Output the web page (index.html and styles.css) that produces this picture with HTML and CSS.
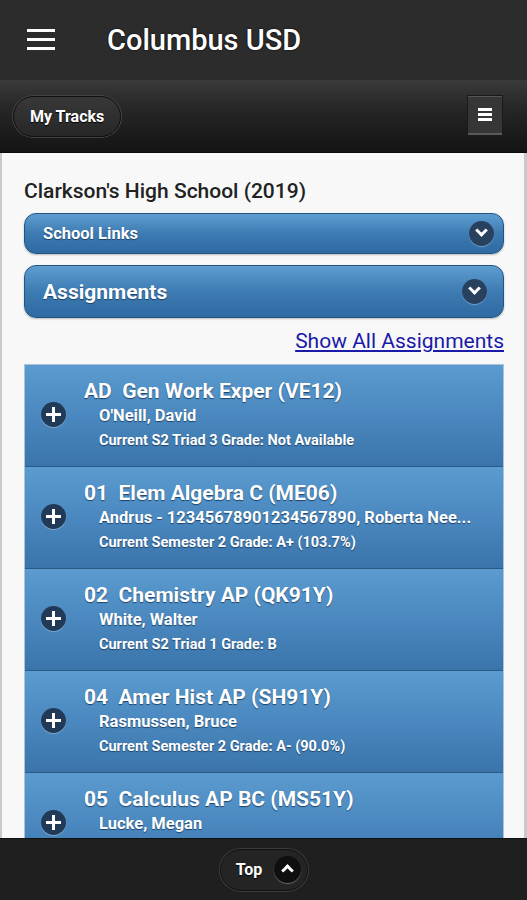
FILE: index.html
```html
<!DOCTYPE html>
<html lang="en">
<head>
    <meta charset="UTF-8">
    <meta name="viewport" content="width=device-width, initial-scale=1.0">
    <title>Columbus USD</title>
    <link rel="stylesheet" href="styles.css">
</head>
<body>

<div class="app">
    <div class="top-bar">
        <span class="burger"><i></i><i></i><i></i></span>
        <h1>Columbus USD</h1>
    </div>
    <div class="tool-bar">
        <a class="pill-btn">My Tracks</a>
        <a class="menu-btn"><i></i><i></i><i></i></a>
    </div>

    <div class="content">
        <h2>Clarkson's High School (2019)</h2>
        <div class="collapsible small">
            <span>School Links</span>
            <span class="circle-icon down"></span>
        </div>
        <div class="collapsible big">
            <span>Assignments</span>
            <span class="circle-icon down"></span>
        </div>
        <div class="link-row"><a href="#">Show All Assignments</a></div>

        <ul class="class-list">
            <li>
                <span class="circle-icon plus"></span>
                <div class="class-text">
                    <h3>AD&nbsp; Gen Work Exper (VE12)</h3>
                    <p class="teacher">O'Neill, David</p>
                    <p class="grade">Current S2 Triad 3 Grade: Not Available</p>
                </div>
            </li>
            <li>
                <span class="circle-icon plus"></span>
                <div class="class-text">
                    <h3>01&nbsp; Elem Algebra C (ME06)</h3>
                    <p class="teacher">Andrus - 12345678901234567890, Roberta Nee...</p>
                    <p class="grade">Current Semester 2 Grade: A+ (103.7%)</p>
                </div>
            </li>
            <li>
                <span class="circle-icon plus"></span>
                <div class="class-text">
                    <h3>02&nbsp; Chemistry AP (QK91Y)</h3>
                    <p class="teacher">White, Walter</p>
                    <p class="grade">Current S2 Triad 1 Grade: B</p>
                </div>
            </li>
            <li>
                <span class="circle-icon plus"></span>
                <div class="class-text">
                    <h3>04&nbsp; Amer Hist AP (SH91Y)</h3>
                    <p class="teacher">Rasmussen, Bruce</p>
                    <p class="grade">Current Semester 2 Grade: A- (90.0%)</p>
                </div>
            </li>
            <li>
                <span class="circle-icon plus"></span>
                <div class="class-text">
                    <h3>05&nbsp; Calculus AP BC (MS51Y)</h3>
                    <p class="teacher">Lucke, Megan</p>
                </div>
            </li>
        </ul>
    </div>

    <div class="bottom-bar">
        <a class="pill-btn top-btn">Top <span class="circle-icon up"></span></a>
    </div>
</div>

</body>
</html>
```

FILE: styles.css
```css
body {
    margin: 0;
    font-family: Roboto, "Liberation Sans", Arial, sans-serif;
    background-color: #1e1e1e;
}
.app {
    display: flex;
    flex-direction: column;
    height: 100vh;
    overflow: hidden;
}
.top-bar {
    height: 80px;
    flex-shrink: 0;
    display: flex;
    align-items: center;
    background-color: #2c2c2c;
}
.top-bar h1 {
    margin: 0 0 0 52px;
    font-size: 29px;
    font-weight: 500;
    color: white;
    text-shadow: 0 0 2px #000000;
}
.burger {
    display: flex;
    flex-direction: column;
    gap: 6px;
    margin-left: 27px;
    margin-top: -2px;
}
.burger i {
    display: block;
    width: 28px;
    height: 3px;
    background-color: white;
}
.tool-bar {
    height: 72px;
    flex-shrink: 0;
    display: flex;
    align-items: center;
    justify-content: space-between;
    padding: 0 25px 0 13px;
    background: linear-gradient(#3a3a3a, #262626 40%, #141414);
    border-bottom: 1px solid #0c0c0c;
}
.pill-btn {
    display: inline-flex;
    align-items: center;
    height: 39px;
    padding: 0 16px;
    border-radius: 21px;
    border: 1px solid #111111;
    box-shadow: 0 0 0 1px #444444;
    background: linear-gradient(#383838, #272727);
    color: white;
    font-size: 16px;
    font-weight: bold;
    text-shadow: 0 1px 1px #000000;
}
.tool-bar .pill-btn {
    margin-top: 1px;
}
.menu-btn {
    display: flex;
    flex-direction: column;
    justify-content: center;
    gap: 2px;
    align-items: center;
    width: 34px;
    height: 36px;
    margin-top: -2px;
    background-color: #363636;
    border-top: 1px solid #555555;
    border-bottom: 2px solid #5a5a5a;
    box-shadow: 0 0 0 1px #1a1a1a;
}
.menu-btn i {
    display: block;
    width: 14px;
    height: 3px;
    background-color: white;
}
.content {
    flex: 1;
    overflow: hidden;
    background-color: #f8f8f8;
    border-left: 2px solid #c9c9c9;
    border-right: 3px solid #c9c9c9;
    padding: 26px 20px 0 22px;
}
.content h2 {
    margin: 0 0 10px 0;
    font-size: 21px;
    font-weight: 500;
    color: #222222;
    line-height: 24px;
}
.collapsible {
    display: flex;
    align-items: center;
    justify-content: space-between;
    border-radius: 12px;
    border: 1px solid #245482;
    background: linear-gradient(#5e9dd0, #3d7bb3 50%, #2f6aa2);
    color: white;
    font-weight: bold;
    text-shadow: 0 1px 1px #1c3f63;
    box-shadow: 0 1px 2px rgba(0, 0, 0, 0.25);
}
.collapsible.small {
    height: 39px;
    padding: 0 9px 0 18px;
    font-size: 16.5px;
    margin-bottom: 11px;
}
.collapsible.big {
    height: 51px;
    padding: 0 16px 0 18px;
    font-size: 21px;
}
.link-row {
    text-align: right;
    margin-top: 10px;
    line-height: 26px;
}
.link-row a {
    color: #1a1aa8;
    font-size: 21px;
}
.circle-icon {
    position: relative;
    display: inline-block;
    flex-shrink: 0;
    width: 25px;
    height: 25px;
    border-radius: 50%;
    background-color: #27415f;
    box-shadow: 0 1px 1px rgba(255, 255, 255, 0.3);
}
.circle-icon.down::after,
.circle-icon.up::after {
    content: "";
    position: absolute;
    left: 8px;
    width: 6px;
    height: 6px;
    border-right: 3px solid white;
    border-bottom: 3px solid white;
}
.circle-icon.down::after {
    top: 5px;
    transform: rotate(45deg);
}
.circle-icon.up::after {
    top: 9px;
    transform: rotate(-135deg);
}
.circle-icon.plus::before,
.circle-icon.plus::after {
    content: "";
    position: absolute;
    background-color: white;
}
.circle-icon.plus::before {
    left: 5px;
    top: 11px;
    width: 15px;
    height: 3px;
}
.circle-icon.plus::after {
    left: 11px;
    top: 5px;
    width: 3px;
    height: 15px;
}
.class-list {
    list-style: none;
    margin: 8px 0 0 0;
    padding: 0;
    border: 1px solid #aac4dc;
}
.class-list li {
    display: flex;
    align-items: flex-start;
    box-sizing: border-box;
    height: 102px;
    padding: 13px 20px 0 16px;
    background: linear-gradient(#5b9bcf, #4a88bf 50%, #3a74aa);
    border-bottom: 1px solid #2a5a88;
    color: white;
    font-weight: bold;
    text-shadow: 0 1px 1px #1d4269;
}
.class-list .circle-icon {
    background-color: #213a57;
    margin-top: 24px;
}
.class-text {
    flex: 1;
    min-width: 0;
    margin-left: 18px;
}
.class-text h3 {
    margin: 0;
    font-size: 21px;
    font-weight: bold;
    line-height: 26px;
}
.class-text p {
    margin: 0 0 0 15px;
    white-space: nowrap;
}
.class-text .teacher {
    font-size: 16.5px;
    line-height: 24px;
}
.class-text .grade {
    font-size: 14.5px;
    line-height: 26px;
}
.bottom-bar {
    height: 61px;
    flex-shrink: 0;
    display: flex;
    align-items: center;
    justify-content: center;
    background-color: #1f1f1f;
    border-top: 1px solid #111111;
}
.top-btn {
    height: 40px;
    padding: 0 6px 0 15px;
    gap: 12px;
    margin-left: 1px;
    background: #242424;
    box-shadow: 0 0 0 1px #3c3c3c;
}
.top-btn .circle-icon {
    background-color: #0f0f0f;
    width: 27px;
    height: 27px;
}
.top-btn .circle-icon.up::after {
    left: 9px;
    top: 10px;
}
```
